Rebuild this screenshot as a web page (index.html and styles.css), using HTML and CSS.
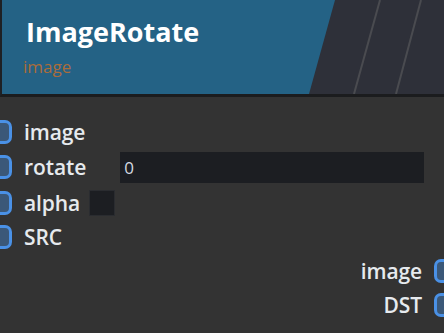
FILE: index.html
```html
<!DOCTYPE html>
<html>
<head>
    <meta charset="utf-8">
    <title>ImageRotate</title>
    <link rel="stylesheet" href="styles.css">
</head>
<body>
    <div class="node">
        <div class="node-header">
            <svg class="header-bg" width="444" height="94" viewBox="0 0 444 94">
                <rect x="0" y="0" width="444" height="94" fill="#2e3039"/>
                <polygon points="0,0 333,0 307,94 0,94" fill="#246285"/>
                <line x1="378" y1="0" x2="352" y2="94" stroke="#4a4b50" stroke-width="2"/>
                <line x1="419" y1="0" x2="394" y2="94" stroke="#4a4b50" stroke-width="2"/>
            </svg>
            <div class="title">ImageRotate</div>
            <div class="category">image</div>
        </div>
        <div class="node-body">
            <div class="row row-image">
                <span class="port port-in"></span>
                <span class="label">image</span>
            </div>
            <div class="row row-rotate">
                <span class="port port-in"></span>
                <span class="label">rotate</span>
                <input class="num-input" type="text" value="0">
            </div>
            <div class="row row-alpha">
                <span class="port port-in"></span>
                <span class="label">alpha</span>
                <span class="checkbox"></span>
            </div>
            <div class="row row-src">
                <span class="port port-in"></span>
                <span class="label">SRC</span>
            </div>
            <div class="row out row-out-image">
                <span class="label">image</span>
                <span class="port port-out"></span>
            </div>
            <div class="row out row-dst">
                <span class="label">DST</span>
                <span class="port port-out"></span>
            </div>
        </div>
    </div>
</body>
</html>
```

FILE: styles.css
```css
html, body{
    margin: 0;
    height: 100%;
}
body{
    background-color: #333333;
    font-family: "Open Sans", "Noto Sans", sans-serif;
    overflow: hidden;
}
.node{
    width: 444px;
    height: 333px;
    position: relative;
    overflow: hidden;
}
.node-header{
    position: relative;
    height: 94px;
    border-bottom: 3px solid #1b1c1e;
    border-left: 2px solid #1e2024;
    box-sizing: content-box;
}
.header-bg{
    position: absolute;
    left: 0;
    top: 0;
}
.title{
    position: relative;
    padding: 14px 0 0 24px;
    color: #ffffff;
    font-weight: 700;
    font-size: 27px;
    line-height: 36px;
}
.category{
    position: relative;
    padding: 6px 0 0 21px;
    color: #ab6c3b;
    font-size: 17px;
    line-height: 22px;
}
.node-body{
    display: flex;
    flex-direction: column;
    padding-top: 17px;
}
.row{
    display: flex;
    align-items: center;
    height: 35px;
}
.row-rotate{
    height: 36px;
}
.row-alpha{
    height: 35px;
}
.row-src{
    height: 34px;
}
.row-out-image{
    height: 33px;
}
.row.out{
    justify-content: flex-end;
}
.label{
    color: #e6eaee;
    font-weight: 600;
    font-size: 21px;
    letter-spacing: -0.1px;
}
.port{
    width: 18px;
    height: 18px;
    border: 3.5px solid #4a91e6;
    border-radius: 7px;
    background-color: #3b5878;
    flex: none;
}
.port-in{
    margin-left: -12px;
    margin-right: 12px;
}
.port-out{
    margin-left: 12px;
    margin-right: -14px;
}
.num-input{
    margin-left: 34px;
    width: 304px;
    height: 31px;
    box-sizing: border-box;
    border: none;
    outline: none;
    background-color: #1c1e22;
    color: #d4dae0;
    font-family: "Open Sans", "Noto Sans", sans-serif;
    font-size: 17px;
    padding: 0 4px;
}
.checkbox{
    margin-left: 9px;
    width: 26px;
    height: 26px;
    box-sizing: border-box;
    background-color: #1c1e22;
    border: 1px solid #2a2c30;
}
```
